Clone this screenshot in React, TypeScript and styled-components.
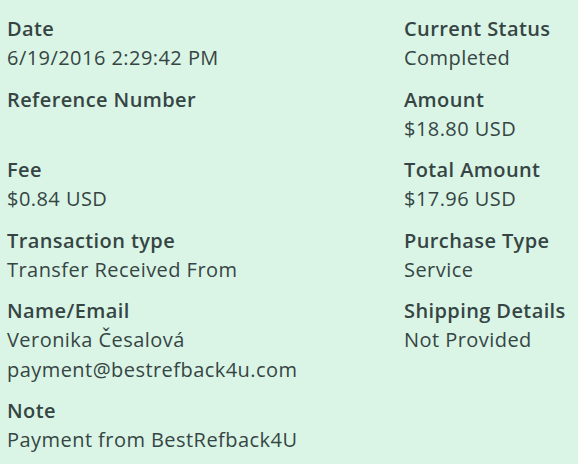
import styled, { createGlobalStyle } from 'styled-components';

const GlobalStyle = createGlobalStyle`
  html, body {
    margin: 0;
    padding: 0;
    background: #daf5e6;
  }
  body {
    font-family: "Open Sans", "Noto Sans", sans-serif;
    color: #364544;
  }
`;

const Page = styled.div`
  display: grid;
  grid-template-columns: 397px 1fr;
  padding: 14px 0 0 7px;
  width: 578px;
  height: 464px;
  box-sizing: border-box;
  overflow: hidden;
`;

const Column = styled.div`
  display: flex;
  flex-direction: column;
  gap: 12px;
`;

const Field = styled.div`
  display: flex;
  flex-direction: column;
`;

const Label = styled.div`
  font-size: 20px;
  font-weight: 600;
  line-height: 29px;
  letter-spacing: 0.4px;
  white-space: nowrap;
`;

const Value = styled.div`
  font-size: 20px;
  font-weight: 400;
  line-height: 29.5px;
  letter-spacing: 0.45px;
  white-space: nowrap;
  min-height: 29px;
`;

type Item = { label: string; values: string[] };

const left: Item[] = [
  { label: 'Date', values: ['6/19/2016 2:29:42 PM'] },
  { label: 'Reference Number', values: ['\u00a0'] },
  { label: 'Fee', values: ['$0.84 USD'] },
  { label: 'Transaction type', values: ['Transfer Received From'] },
  { label: 'Name/Email', values: ['Veronika Česalová', 'payment@bestrefback4u.com'] },
  { label: 'Note', values: ['Payment from BestRefback4U'] },
];

const right: Item[] = [
  { label: 'Current Status', values: ['Completed'] },
  { label: 'Amount', values: ['$18.80 USD'] },
  { label: 'Total Amount', values: ['$17.96 USD'] },
  { label: 'Purchase Type', values: ['Service'] },
  { label: 'Shipping Details', values: ['Not Provided'] },
];

const renderColumn = (items: Item[]) => (
  <Column>
    {items.map((item) => (
      <Field key={item.label}>
        <Label>{item.label}</Label>
        {item.values.map((v, i) => (
          <Value key={i}>{v}</Value>
        ))}
      </Field>
    ))}
  </Column>
);

export default function App() {
  return (
    <>
      <GlobalStyle />
      <Page>
        {renderColumn(left)}
        {renderColumn(right)}
      </Page>
    </>
  );
}
